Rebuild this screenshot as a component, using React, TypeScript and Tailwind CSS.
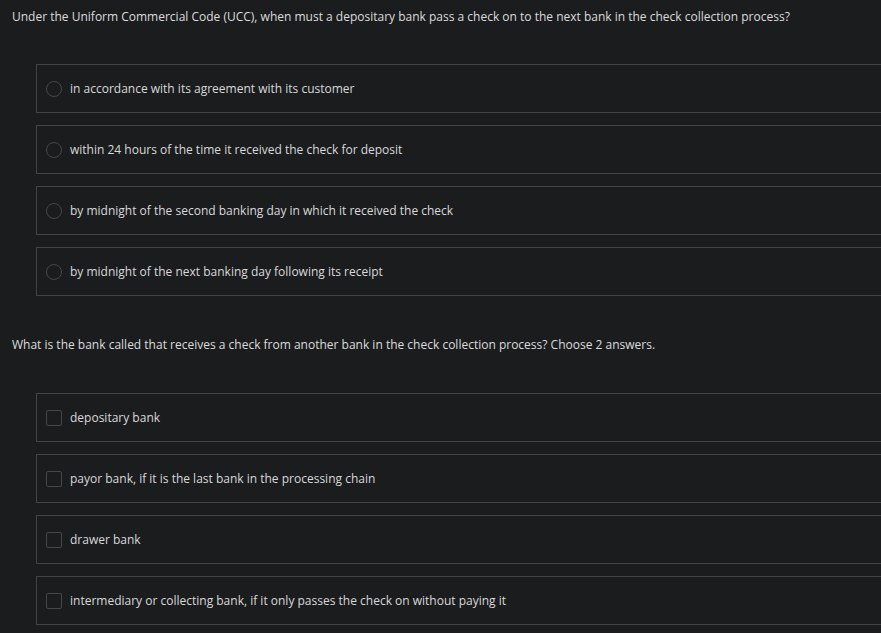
import React from "react";

type Question = {
  text: string;
  kind: "radio" | "checkbox";
  options: string[];
};

const questions: Question[] = [
  {
    text: "Under the Uniform Commercial Code (UCC), when must a depositary bank pass a check on to the next bank in the check collection process?",
    kind: "radio",
    options: [
      "in accordance with its agreement with its customer",
      "within 24 hours of the time it received the check for deposit",
      "by midnight of the second banking day in which it received the check",
      "by midnight of the next banking day following its receipt",
    ],
  },
  {
    text: "What is the bank called that receives a check from another bank in the check collection process? Choose 2 answers.",
    kind: "checkbox",
    options: [
      "depositary bank",
      "payor bank, if it is the last bank in the processing chain",
      "drawer bank",
      "intermediary or collecting bank, if it only passes the check on without paying it",
    ],
  },
];

function Option({ label, kind }: { label: string; kind: Question["kind"] }) {
  return (
    <div className="flex h-[49px] w-[860px] items-center border border-[#424345] pl-[9px]">
      {kind === "radio" ? (
        <span className="h-[16px] w-[16px] shrink-0 rounded-full border border-[#46474a]" />
      ) : (
        <span className="h-[16px] w-[16px] shrink-0 rounded-[2px] border border-[#46474a]" />
      )}
      <span className="ml-[8px] text-[12px] text-[#d9d9d9]">{label}</span>
    </div>
  );
}

export default function App() {
  return (
    <div
      className="h-[633px] w-[881px] overflow-hidden bg-[#1b1c1e]"
      style={{ fontFamily: '"Open Sans", "Noto Sans", sans-serif' }}
    >
      {questions.map((q, i) => (
        <div key={i} className={i === 0 ? "pt-[8px]" : "pt-[40px]"}>
          <p className="pl-[12px] text-[12px] leading-[18px] text-[#dcdcdc]">{q.text}</p>
          <div
            className={`flex flex-col gap-[12px] pl-[36px] ${i === 0 ? "mt-[38px]" : "mt-[39px]"}`}
          >
            {q.options.map((o) => (
              <Option key={o} label={o} kind={q.kind} />
            ))}
          </div>
        </div>
      ))}
    </div>
  );
}
